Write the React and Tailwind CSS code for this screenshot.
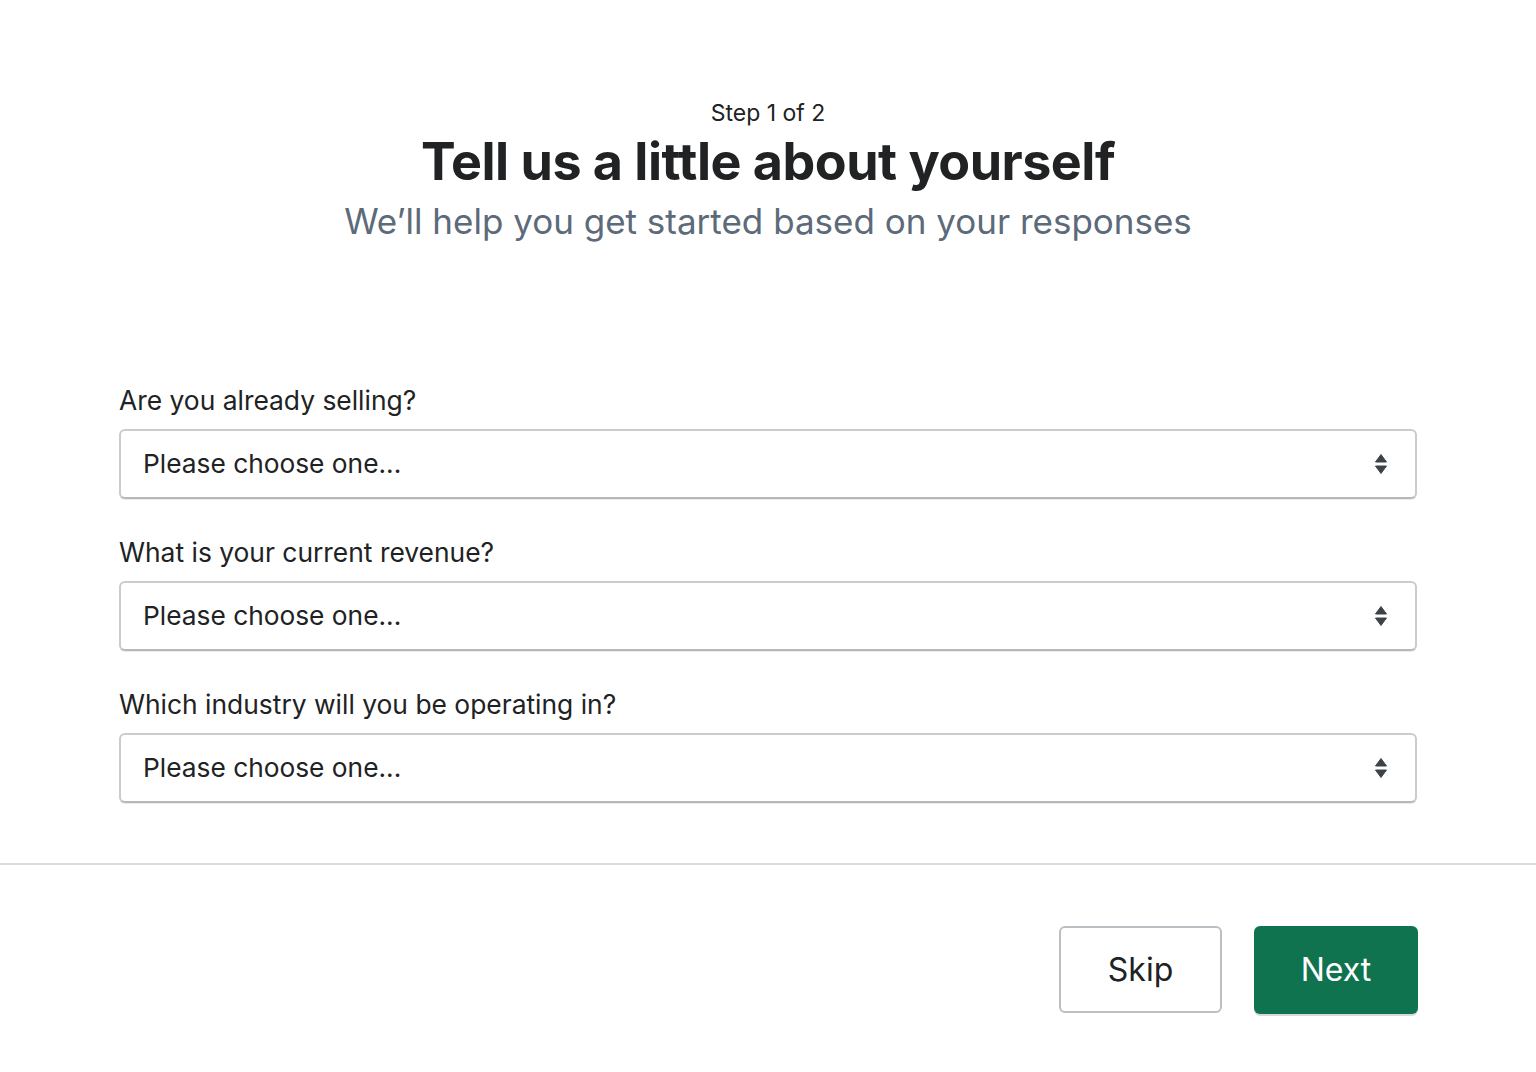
import React from "react";

function Arrows() {
  return (
    <svg width="14" height="24" viewBox="0 0 14 24" className="shrink-0">
      <path d="M7 2.5 L12.5 10 L1.5 10 Z" fill="#3d4247" strokeLinejoin="round" stroke="#3d4247" strokeWidth="1" />
      <path d="M7 21.5 L12.5 14 L1.5 14 Z" fill="#3d4247" strokeLinejoin="round" stroke="#3d4247" strokeWidth="1" />
    </svg>
  );
}

function Field({ label }) {
  return (
    <div className="flex flex-col">
      <label className="text-[26.4px] leading-[32px] text-[#202223] mb-[13px]">{label}</label>
      <div className="h-[70px] rounded-[6px] border-2 border-[#c9cccf] border-b-[#b5b8bb] shadow-[0_1px_0_rgba(0,0,0,0.08)] flex items-center justify-between pl-[22px] pr-[27px] bg-white">
        <span className="text-[26.3px] text-[#202223]">Please choose one...</span>
        <Arrows />
      </div>
    </div>
  );
}

export default function App() {
  return (
    <div className="w-full min-h-[1072px] bg-white" style={{ fontFamily: "Inter, 'Noto Sans', sans-serif" }}>
      <div className="flex flex-col items-center pt-[98px]">
        <div className="text-[23px] leading-[30px] text-[#202223]">Step 1 of 2</div>
        <h1 className="text-[52px] leading-[62px] font-bold text-[#202223] tracking-[-0.5px] mt-[3px]">Tell us a little about yourself</h1>
        <p className="text-[35px] leading-[48px] text-[#5c6a79] mt-[4px]">We’ll help you get started based on your responses</p>
      </div>
      <div className="px-[119px] mt-[139px] flex flex-col gap-[37px]">
        <Field label="Are you already selling?" />
        <Field label="What is your current revenue?" />
        <Field label="Which industry will you be operating in?" />
      </div>
      <div className="mt-[60px] h-[2px] bg-[#dcdce0]" />
      <div className="flex justify-end gap-[32px] px-[118px] mt-[61px]">
        <button className="w-[163px] h-[87px] rounded-[6px] border-2 border-[#babfc3] bg-white text-[32px] text-[#202223]">Skip</button>
        <button className="w-[164px] h-[88px] rounded-[6px] bg-[#107350] text-[32px] text-white shadow-[0_2px_0_rgba(0,0,0,0.15)]">Next</button>
      </div>
    </div>
  );
}
